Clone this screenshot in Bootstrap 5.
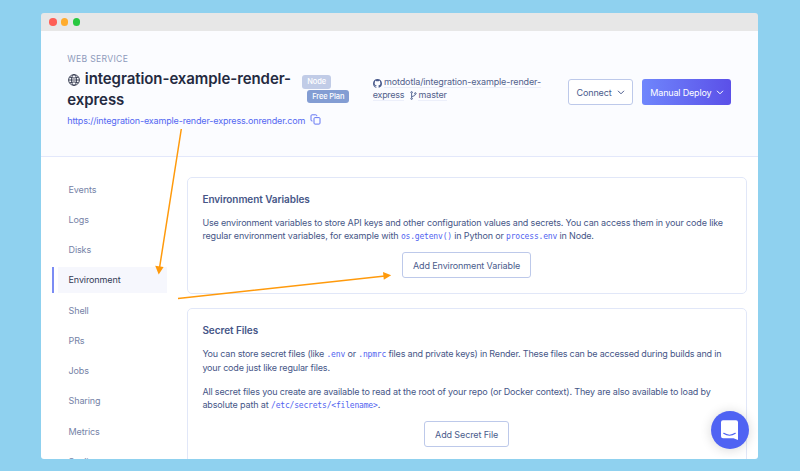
<!DOCTYPE html>
<html lang="en">
<head>
<meta charset="utf-8">
<title>integration-example-render-express</title>
<link rel="stylesheet" href="https://cdn.jsdelivr.net/npm/bootstrap@5.3.0/dist/css/bootstrap.min.css">
<style>
  body { height: 471px; overflow: hidden; background: #8fd1ef; color: #465687; font: 400 9px/13.4px Inter, "Liberation Sans", sans-serif; letter-spacing: -.155px; padding: 12.5px 41.5px 0 41.3px; }
  .window { height: 446px; width: 717px; border-radius: 3px; overflow: hidden; }
  .titlebar { height: 18.5px; background: #e7e7e7; padding-left: 8px; gap: 4.2px; }
  .dot { width: 7.5px; height: 7.5px; }
  .dot-r { background: #fe5f57; } .dot-y { background: #ffac2e; } .dot-g { background: #28c840; }
  .service-head { height: 125.5px; background: #fbfcff; border-bottom: 1px solid #e3e8fb; padding: 0 27px 0 26px; }
  .info { width: 244px; padding-top: 20.5px; }
  .kicker { font-size: 8.6px; line-height: 14px; letter-spacing: .31px; color: #8d9abb; }
  h1 { font-size: 15px; line-height: 20.5px; letter-spacing: -.07px; font-weight: 600; color: #242a3f; margin: 3.5px 0 0; }
  .globe { width: 12px; height: 12px; margin: 1px 4.3px 0 1.2px; vertical-align: -2.3px; }
  .url { color: #5468f2; text-decoration: none; letter-spacing: -.16px; }
  .url-row { margin-top: 4.2px; height: 14px; }
  .tags { width: 56px; margin-left: -9px; padding-top: 44.3px; }
  .tag { height: 13.6px; border-radius: 3px; font-size: 7.5px; font-weight: 500; line-height: 14px; letter-spacing: -.13px; color: #fff; padding: 0 4.9px; width: max-content; }
  .tag-node { background: #c1cce7; }
  .tag-plan { background: #839dd3; margin: 1px 0 0 5px; }
  .repo { width: 180px; margin-left: 14.5px; padding-top: 45.3px; line-height: 12.7px; letter-spacing: -.13px; }
  .repo a { color: #52618c; text-decoration: none; border-bottom: 1px solid #eceffa; line-height: 11px; }
  .octo { width: 9px; height: 9px; margin-right: 2.2px; vertical-align: -2.5px; }
  .branch { width: 7px; height: 9px; margin: 0 1.3px 0 6px; vertical-align: -2px; }
  .repo .repo-tail { letter-spacing: -.3px; }
  .actions { gap: 9.5px; padding-top: 48px; }
  .btn { --bs-btn-font-size: 9px; --bs-btn-line-height: 12px; --bs-btn-padding-y: 6px; --bs-btn-border-radius: 3px; --bs-btn-color: #4a5b8c; --bs-btn-border-color: #bdc9ea; --bs-btn-bg: #fff; letter-spacing: -.12px; display: flex; align-items: center; height: 26px; padding-top: 7px; }
  .btn-connect { width: 64.5px; padding-left: 7.2px; padding-right: 6.5px; }
  .btn-deploy { width: 89px; padding-left: 7px; padding-right: 6.5px; color: #fff; border-color: transparent; background: linear-gradient(90deg, #6f86fc, #5b50e8) border-box; letter-spacing: -.17px; }
  .btn-variable { width: 129px; margin-top: 9.8px; padding-left: 0; padding-right: 0; }
  .btn-file { width: 85px; margin-top: 9.8px; padding-left: 0; padding-right: 0; }
  .service-body { height: 302px; background: #fff; padding-left: 10.5px; }
  .side { width: 115px; padding-top: 20.2px; }
  .side .nav-link { height: 25.6px; margin: 0 0 4.65px 6.7px; padding: 0 0 0 10px; line-height: 26.4px; color: #7582a6; letter-spacing: -.1px; }
  .side .active-item { height: 25.6px; margin-bottom: 4.65px; border-left: 2px solid #7b8cf4; }
  .side .active-item .nav-link { background: #f6f7fd; color: #333a55; margin: 0 0 0 4.7px; }
  .main-col { width: 560px; margin-left: 20px; padding-top: 20px; }
  .panel { border: 1px solid #e1e7f8; border-radius: 5px; padding: 14.4px 15px 0 14.6px; white-space: nowrap; }
  .panel-a { height: 117px; margin-bottom: 14.5px; }
  .panel-b { height: 190px; }
  h2 { font-size: 10px; line-height: 14px; font-weight: 600; letter-spacing: -.06px; color: #465687; margin: 0 0 9.8px; }
  .panel p { margin: 0; }
  .panel p + p { margin-top: 10.5px; }
  .code-word { font: 8px/10px "DejaVu Sans Mono", monospace; letter-spacing: -.18px; color: #5163f0; }
  .fit-tight { letter-spacing: -.19px; }
  .fit-wide { letter-spacing: -.13px; }
  .chat { position: absolute; left: 711px; top: 411px; width: 38px; height: 38px; background: #4f63f3; box-shadow: 0 1px 12px rgba(0,0,0,.16); clip-path: inset(-20px -9px -9px -20px); }
  .arrows { position: absolute; left: 0; top: 0; pointer-events: none; }
</style>
</head>
<body>
<div class="window">
  <div class="titlebar d-flex align-items-center">
    <span class="dot dot-r rounded-circle"></span><span class="dot dot-y rounded-circle"></span><span class="dot dot-g rounded-circle"></span>
  </div>
  <header class="service-head d-flex text-nowrap">
    <div class="info flex-shrink-0">
      <div class="kicker">WEB SERVICE</div>
      <h1><svg class="globe" viewBox="0 0 12 12" fill="none" stroke="#30364b" stroke-width=".9"><circle cx="6" cy="6" r="5.4"/><ellipse cx="6" cy="6" rx="2.5" ry="5.4"/><path d="M.6 6h10.8M1.600 3.200q4.400 1.700 8.800 0M1.600 8.800q4.400-1.700 8.800 0"/></svg>integration-example-render-<br>express</h1>
      <div class="url-row d-flex align-items-center"><a class="url" href="#">https://integration-example-render-express.onrender.com</a>
        <svg class="ms-1 mb-1 flex-shrink-0" width="12" height="12" viewBox="0 0 12 12" fill="none" stroke="#6577f3" stroke-width="1"><rect x="5" y="4.600" width="6" height="6.500" rx="1"/><path d="M3.500 8H3a1 1 0 0 1-1-1V2.800a1 1 0 0 1 1-1h3.800a1 1 0 0 1 1 1v.4"/></svg></div>
    </div>
    <div class="tags flex-shrink-0">
      <div class="tag tag-node">Node</div>
      <div class="tag tag-plan">Free Plan</div>
    </div>
    <div class="repo flex-shrink-0">
      <div><svg class="octo" viewBox="0 0 16 16" fill="#4a5b8c"><path d="M8 0C3.580 0 0 3.580 0 8c0 3.540 2.290 6.530 5.470 7.590.4.070.55-.17.55-.38v-1.490c-2.010.37-2.530-.49-2.690-.94-.09-.23-.48-.94-.82-1.130-.28-.15-.68-.52-.01-.53.63-.01 1.080.58 1.230.82.720 1.210 1.870.87 2.330.66.070-.52.28-.87.510-1.070-1.780-.2-3.640-.89-3.640-3.950 0-.87.310-1.590.82-2.150-.08-.2-.36-1.020.08-2.120 0 0 .67-.21 2.200.82a7.600 7.600 0 0 1 4 0c1.530-1.040 2.200-.82 2.200-.82.44 1.100.16 1.920.08 2.120.51.56.82 1.270.82 2.150 0 3.070-1.870 3.750-3.650 3.950.29.25.54.73.54 1.480v2.200c0 .21.15.46.55.38A8 8 0 0 0 16 8c0-4.420-3.580-8-8-8z"/></svg><a href="#">motdotla/integration-example-render-</a></div>
      <div><a class="repo-tail" href="#">express</a><svg class="branch" viewBox="0 0 7 9" fill="none" stroke="#4a5b8c" stroke-width=".9"><circle cx="1.600" cy="1.400" r=".8"/><circle cx="1.600" cy="7.600" r=".8"/><circle cx="5.400" cy="2.500" r=".8"/><path d="M1.600 2.200v4.600M5.400 3.300Q5.300 5 1.800 5.600"/></svg><a href="#">master</a></div>
    </div>
    <div class="actions d-flex align-items-start ms-auto flex-shrink-0">
      <button class="btn btn-connect justify-content-between" type="button">Connect<svg width="8" height="6" viewBox="0 0 8 6" fill="none" stroke="#4a5b8c"><path d="M1 .8l3 3 3-3"/></svg></button>
      <button class="btn btn-deploy justify-content-between" type="button">Manual Deploy<svg width="8" height="6" viewBox="0 0 8 6" fill="none" stroke="#fff"><path d="M1 .8l3 3 3-3"/></svg></button>
    </div>
  </header>
  <div class="service-body d-flex">
    <ul class="side nav flex-column flex-nowrap flex-shrink-0">
      <li class="nav-item"><a class="nav-link" href="#">Events</a></li>
      <li class="nav-item"><a class="nav-link" href="#">Logs</a></li>
      <li class="nav-item"><a class="nav-link" href="#">Disks</a></li>
      <li class="nav-item active-item"><a class="nav-link active" href="#">Environment</a></li>
      <li class="nav-item"><a class="nav-link" href="#">Shell</a></li>
      <li class="nav-item"><a class="nav-link" href="#">PRs</a></li>
      <li class="nav-item"><a class="nav-link" href="#">Jobs</a></li>
      <li class="nav-item"><a class="nav-link" href="#">Sharing</a></li>
      <li class="nav-item"><a class="nav-link" href="#">Metrics</a></li>
      <li class="nav-item"><a class="nav-link" href="#">Scaling</a></li>
    </ul>
    <main class="main-col flex-shrink-0">
      <section class="panel panel-a">
        <h2>Environment Variables</h2>
        <p>Use environment variables to store API keys and other configuration values and secrets. You can access them in your code like<br><span class="fit-wide">regular environment variables, for example with</span> <span class="code-word">os.getenv()</span> in Python or <span class="code-word">process.env</span> in Node.</p>
        <button class="btn btn-variable mx-auto justify-content-center" type="button">Add Environment Variable</button>
      </section>
      <section class="panel panel-b">
        <h2>Secret Files</h2>
        <p><span class="fit-tight">You can store secret files (like</span> <span class="code-word">.env</span> or <span class="code-word">.npmrc</span> <span class="fit-tight">files and private keys) in Render. These files can be accessed during builds and in</span><br>your code just like regular files.</p>
        <p>All secret files you create are available to read at the root of your repo (or Docker context). They are also available to load by<br><span class="fit-wide">absolute path at</span> <span class="code-word">/etc/secrets/&lt;filename&gt;</span>.</p>
        <button class="btn btn-file mx-auto justify-content-center" type="button">Add Secret File</button>
      </section>
    </main>
  </div>
</div>
<div class="chat rounded-circle d-flex align-items-center justify-content-center">
  <svg width="20" height="22" viewBox="0 0 20 22"><path d="M3 1.200h13a2 2 0 0 1 2 2V21l-4.500-1.800H3a2 2 0 0 1-2-2v-14a2 2 0 0 1 2-2z" fill="#fff"/><path d="M3.700 14.300q5.800 3.800 11.600 0" fill="none" stroke="#4f63f3" stroke-width="1.100" stroke-linecap="round"/></svg>
</div>
<svg class="arrows" width="800" height="471" fill="none" stroke="#ff9a0c" stroke-width="1.500"><path d="M181.300 129L159.500 268M178 298.500L385 276"/><path d="M155.200 265.800l8.400 1.100-4.900 7.600zM383 272l8.200 3.300-7.400 4.500z" fill="#ff9a0c" stroke="none"/></svg>
<script src="https://cdn.jsdelivr.net/npm/bootstrap@5.3.0/dist/js/bootstrap.bundle.min.js"></script>
</body>
</html>
